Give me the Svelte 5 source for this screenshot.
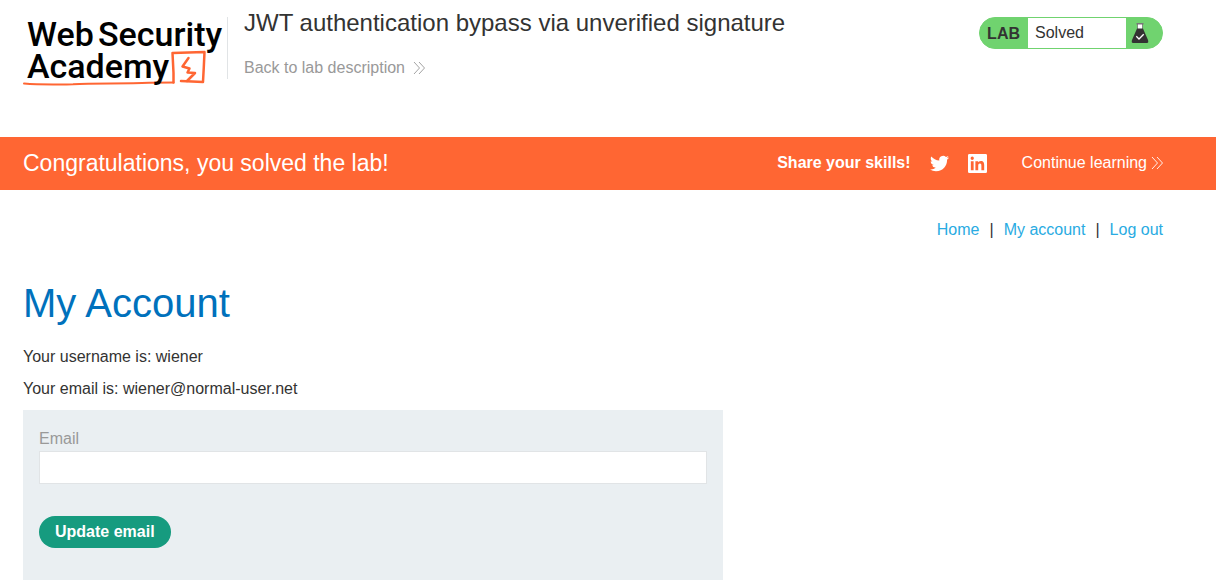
<script>
  let email = $state('');
</script>

{#snippet chevrons()}
  <svg class="chevrons" viewBox="0 0 12 14" aria-hidden="true">
    <path d="M1 1l5.500 6L1 13M6 1l5.500 6L6 13" fill="none" stroke="currentColor" stroke-width="0.9" />
  </svg>
{/snippet}

<header class="top wrap">
  <a class="logo" href="#academy" aria-label="Web Security Academy">
    <svg viewBox="0 0 204 72" width="204" height="72">
      <g fill="none" stroke="#ff6633" stroke-linejoin="round" stroke-linecap="round">
        <path d="M1 66.600C18 68 34 67.500 50 67.300C72 66 100 67 126 65.800L150.500 65.500" stroke-width="2" />
        <path d="M150.500 65.500V56L149.500 36L181.500 35L180.800 50L180 65L158 64" stroke-width="2.500" />
        <path d="M165.500 41L159.500 49.500L166.500 51.500L164.500 55.500L172 56L164 64" stroke-width="2.500" />
      </g>
      <g class="wordmark">
        <text x="4" y="29">Web</text>
        <text x="75" y="29">Security</text>
        <text x="4" y="61">Academy</text>
      </g>
    </svg>
  </a>
  <div class="heading">
    <h2>JWT authentication bypass via unverified signature</h2>
    <a class="back" href="#description">Back to lab description {@render chevrons()}</a>
  </div>
  <div class="status">
    <span class="lab">LAB</span>
    <span class="state">Solved</span>
    <svg class="flask" viewBox="0 0 18 22" aria-hidden="true">
      <path d="M6.500 2h5v6h-5z" fill="#fff" />
      <path d="M5.500 1h7v1.500h-7z" fill="#777" />
      <path d="M6.500 2v5M11.500 2v5" stroke="#666" stroke-width=".7" />
      <path d="M6 6.500h6l5 11.500c.6 1.800.2 3-1 3H2c-1.200 0-1.600-1.200-1-3z" fill="#333332" />
      <path d="M5.300 14.300l2.700 2.700 4.700-4.700" fill="none" stroke="#fff" stroke-width="1.300" />
    </svg>
  </div>
</header>

<section class="banner">
  <div class="wrap banner-row">
    <h4>Congratulations, you solved the lab!</h4>
    <span class="share">Share your skills!</span>
    <a class="social" href="#twitter" aria-label="Twitter">
      <svg viewBox="0 0 24 24"><path fill="#fff" d="M23.950 4.570a10 10 0 0 1-2.820.770 4.960 4.960 0 0 0 2.160-2.720c-.950.550-2 .950-3.130 1.180a4.920 4.920 0 0 0-8.380 4.480C7.690 8.090 4.070 6.130 1.640 3.160a4.820 4.820 0 0 0-.670 2.480c0 1.710.870 3.210 2.190 4.100a4.900 4.900 0 0 1-2.230-.620v.060a4.920 4.920 0 0 0 3.950 4.830 5 5 0 0 1-2.210.080 4.940 4.940 0 0 0 4.600 3.420A9.870 9.870 0 0 1 0 19.540a13.990 13.990 0 0 0 7.550 2.210c9.050 0 14-7.500 14-13.980 0-.210 0-.420-.020-.630a9.940 9.940 0 0 0 2.460-2.550z" /></svg>
    </a>
    <a class="social" href="#linkedin" aria-label="LinkedIn">
      <svg viewBox="0 0 24 24"><path fill="#fff" fill-rule="evenodd" d="M1.700 0h20.600Q24 0 24 1.700v20.600q0 1.700-1.700 1.700H1.700Q0 24 0 22.300V1.700Q0 0 1.700 0zM3.600 9v11.500h3.500V9zM5.350 3.300a2.070 2.070 0 1 0 0 4.140 2.070 2.070 0 1 0 0-4.140zM9.350 9v11.500h3.550v-5.600c0-1.500.3-2.950 2.150-2.950s1.850 1.700 1.850 3.050v5.500h3.550v-6.300c0-3.100-.650-5.500-4.250-5.500-1.750 0-2.900.950-3.400 1.850V9z" /></svg>
    </a>
    <a class="continue" href="#learning">Continue learning {@render chevrons()}</a>
  </div>
</section>

<main class="wrap">
  <nav>
    <a href="#home">Home</a><span>|</span><a href="#account">My account</a><span>|</span><a href="#logout">Log out</a>
  </nav>
  <h1>My Account</h1>
  <p>Your username is: wiener</p>
  <p>Your email is: wiener@normal-user.net</p>
  <form onsubmit={(event) => event.preventDefault()}>
    <label for="email">Email</label>
    <input id="email" type="email" bind:value={email} />
    <button type="submit">Update email</button>
  </form>
</main>

<style>
  :global(body) {
    margin: 0;
    background: #fff;
    color: #333332;
    font: 16px/24px "Liberation Sans", Arial, sans-serif;
  }
  .wrap { padding: 0 53px 0 23px; }
  a { text-decoration: none; }
  h1, h2, h4, p { margin: 0; font-weight: 400; }
  .chevrons { width: 12px; height: 14px; }
  .top {
    display: flex;
    align-items: flex-start;
    min-height: 120px;
    padding-top: 17px;
  }
  .logo {
    height: 62px;
    border-right: 1px solid #e1e4e6;
  }
  .logo svg { display: block; overflow: visible; }
  .wordmark {
    font: 500 34px Roboto, sans-serif;
    fill: #000;
  }
  .heading { flex: 1; padding-left: 16px; }
  h2 { font-size: 24px; line-height: 28px; margin-top: -8px; }
  .back {
    display: inline-flex;
    align-items: center;
    gap: 8px;
    margin-top: 19px;
    color: #999;
  }
  .status {
    display: flex;
    align-items: center;
    box-sizing: border-box;
    height: 32px;
    padding-right: 13px;
    border: 1px solid #70d36f;
    border-radius: 16px;
    background: #70d36f;
    line-height: 30px;
  }
  .lab { padding: 2px 8px 0 7px; font-weight: 700; }
  .state { width: 91px; padding-left: 7px; background: #fff; }
  .flask { width: 18px; height: 22px; margin-left: 5px; }
  .banner { background: #ff6633; color: #fff; }
  .banner-row {
    display: flex;
    align-items: center;
    box-sizing: border-box;
    min-height: 53px;
    padding-bottom: 1px;
  }
  h4 { flex: 1; font-size: 23px; }
  .share { margin-right: 19px; font-weight: 700; }
  .social { height: 19px; margin-right: 19px; }
  .social svg { width: 19px; height: 19px; display: block; }
  .continue {
    display: flex;
    align-items: center;
    gap: 4px;
    margin-left: 16px;
    color: #fff;
  }
  nav { display: flex; justify-content: flex-end; gap: 10px; padding-top: 28px; }
  nav a { color: #29abe2; }
  h1 { margin: 37px 0 18px; color: #0071bc; font-size: 40px; line-height: 48px; }
  p { margin-bottom: 8px; }
  form {
    box-sizing: border-box;
    max-width: 700px;
    margin-top: 9px;
    padding: 17px 16px 32px;
    background: #eaeff2;
  }
  label { display: block; color: #999; }
  input {
    display: block;
    box-sizing: border-box;
    width: 100%;
    height: 33px;
    padding: 4px 8px;
    border: 1px solid #e1e4e6;
    background: #fff;
    font: inherit;
  }
  button {
    height: 32px;
    margin-top: 32px;
    padding: 0 16px;
    border: 0;
    border-radius: 16px;
    background: #169b7f;
    color: #fff;
    font: inherit;
    font-weight: 700;
    display: block;
  }
</style>
